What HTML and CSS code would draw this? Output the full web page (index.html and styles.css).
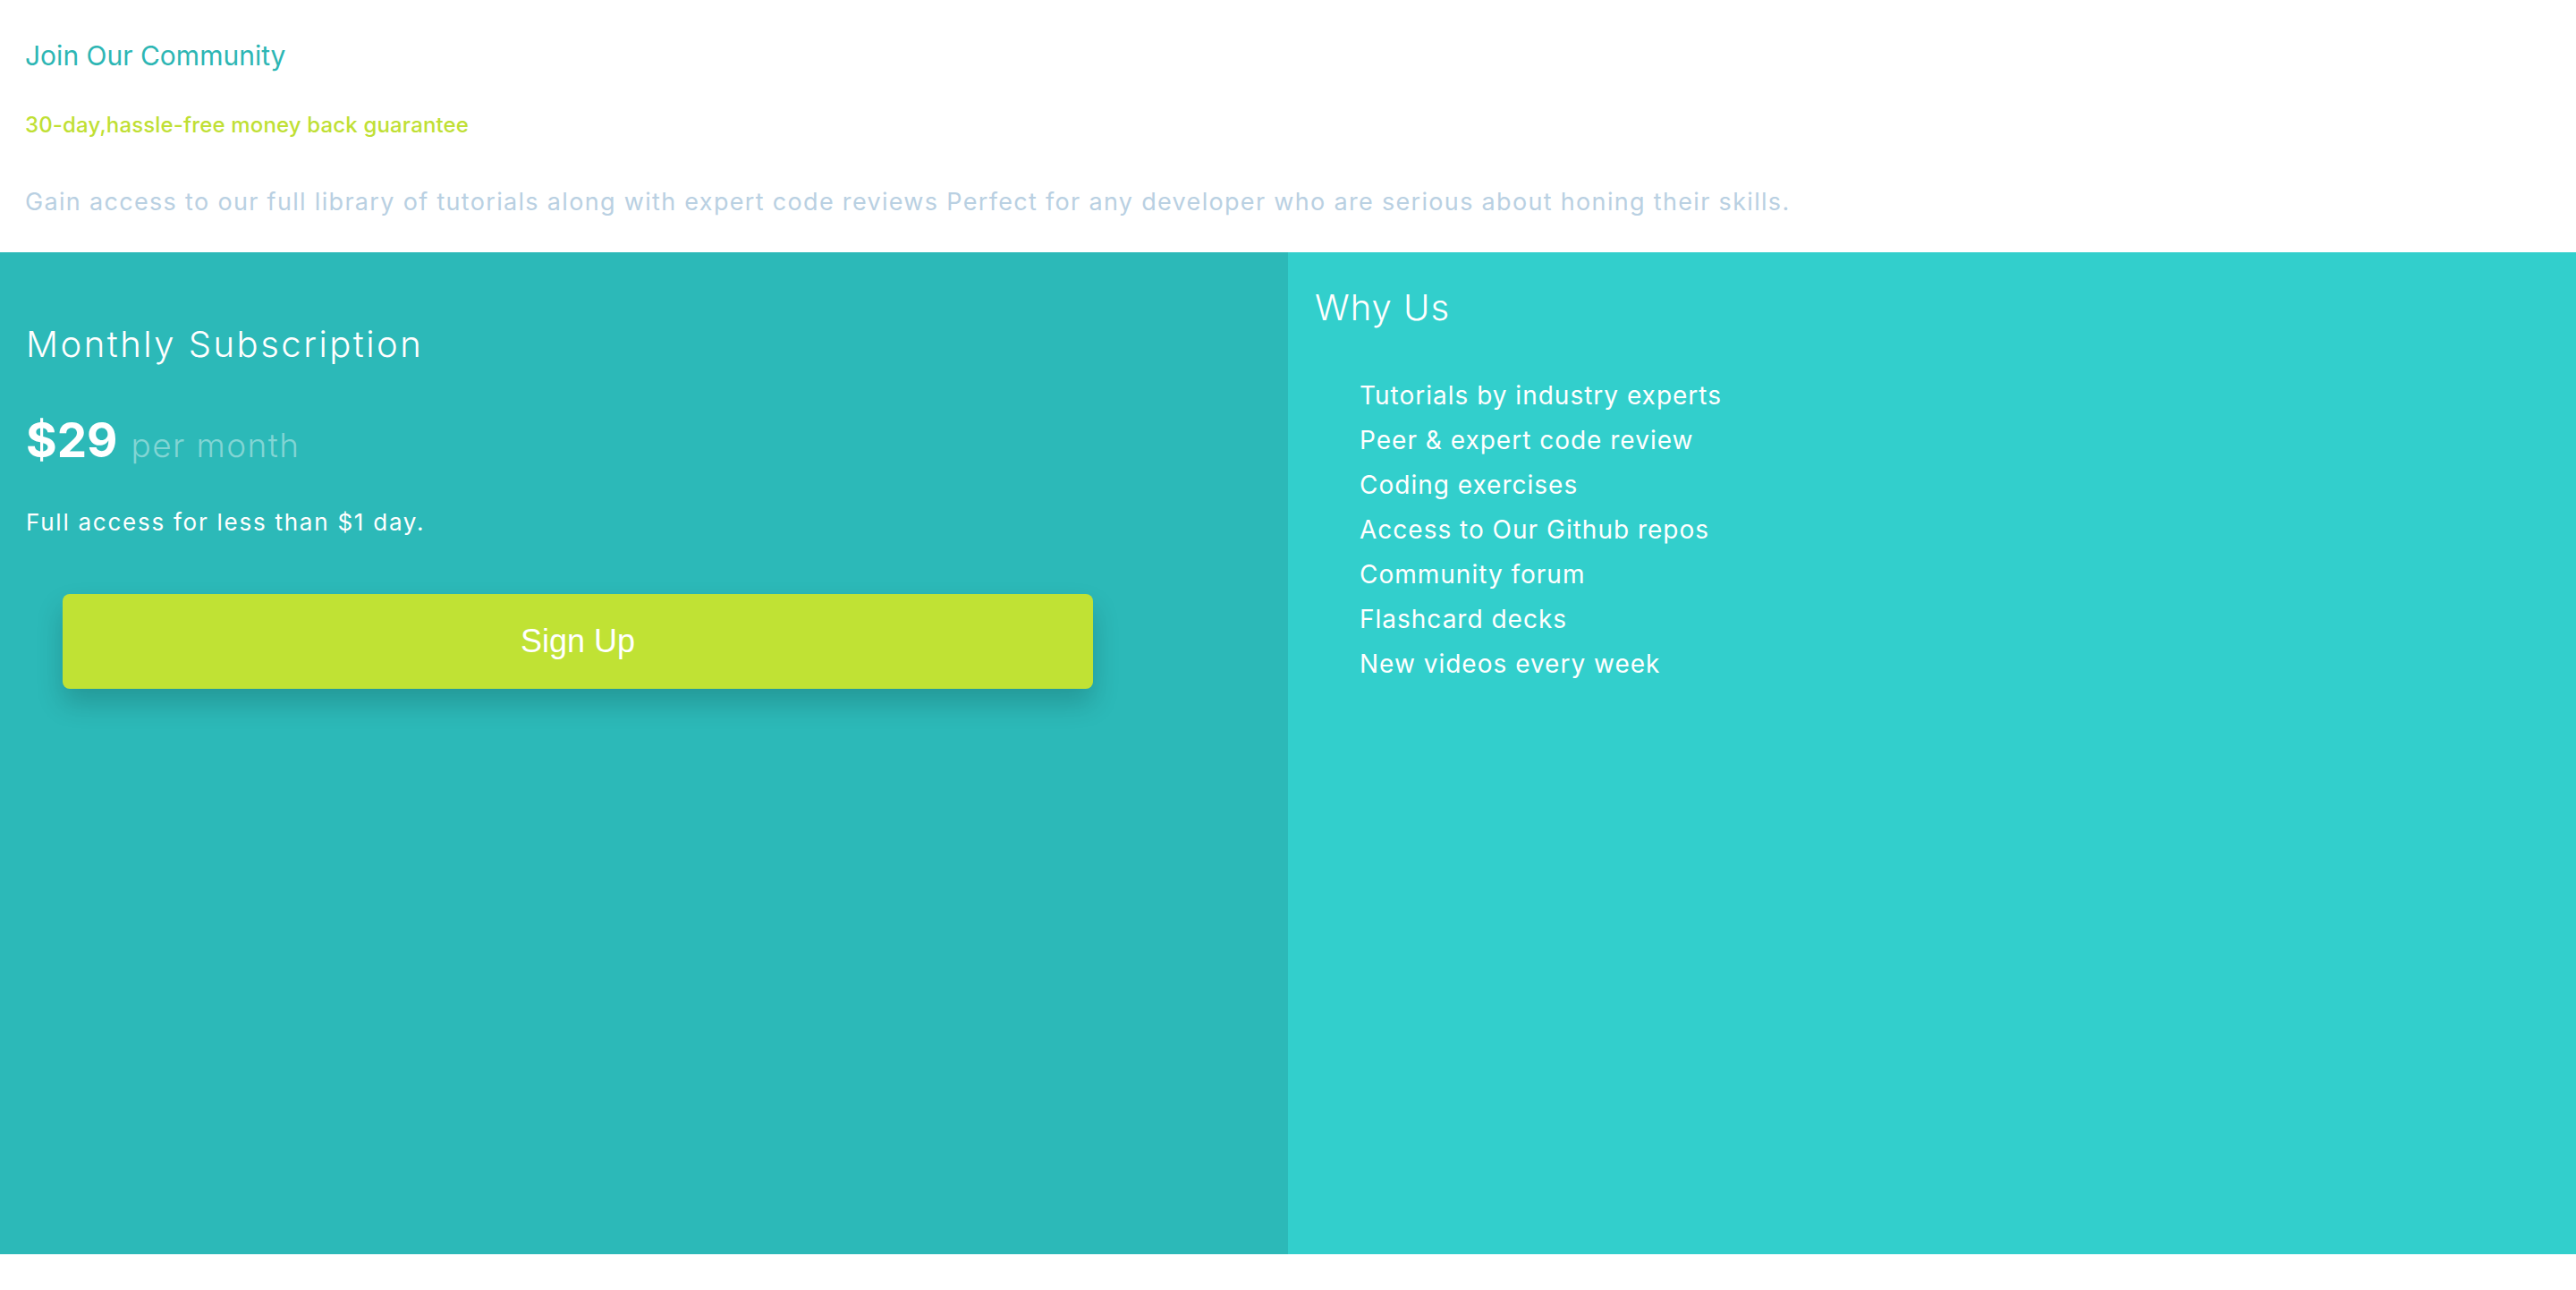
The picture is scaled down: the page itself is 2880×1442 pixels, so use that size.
FILE: index.html
```html
<!DOCTYPE html>
<html lang="en">
<head>
<meta charset="utf-8">
<title>Join Our Community</title>
<link rel="stylesheet" href="styles.css">
</head>
<body>
<header class="intro">
  <h1 class="intro-title">Join Our Community</h1>
  <p class="intro-guarantee">30-day,hassle-free money back guarantee</p>
  <p class="intro-desc">Gain access to our full library of tutorials along with expert code reviews Perfect for any developer who are serious about honing their skills.</p>
</header>
<main class="pricing">
  <section class="plan">
    <h2 class="plan-title">Monthly Subscription</h2>
    <p class="plan-price"><span class="plan-amount">$29</span><span class="plan-period">per month</span></p>
    <p class="plan-note">Full access for less than $1 day.</p>
    <button class="plan-button" type="button">Sign Up</button>
  </section>
  <section class="why">
    <h2 class="why-title">Why Us</h2>
    <ul class="why-list">
      <li>Tutorials by industry experts</li>
      <li>Peer &amp; expert code review</li>
      <li>Coding exercises</li>
      <li>Access to Our Github repos</li>
      <li>Community forum</li>
      <li>Flashcard decks</li>
      <li>New videos every week</li>
    </ul>
  </section>
</main>
</body>
</html>
```

FILE: styles.css
```css
* { box-sizing: border-box; }

html, body {
  margin: 0;
  padding: 0;
  background: #ffffff;
}

body {
  font-family: Inter, "Open Sans", "DejaVu Sans", sans-serif;
  font-weight: 400;
}

.intro {
  padding: 42px 28px 39px;
}

.intro-title {
  margin: 0 0 43px;
  font-size: 30px;
  line-height: 40px;
  font-weight: 400;
  color: #2db6b4;
}

.intro-guarantee {
  margin: 0 0 54px;
  font-size: 24px;
  line-height: 30px;
  font-weight: 500;
  letter-spacing: 0.15px;
  color: #c0df34;
}

.intro-desc {
  margin: 0;
  font-size: 27px;
  line-height: 34px;
  letter-spacing: 1.32px;
  color: #b9d0e2;
}

.pricing {
  display: grid;
  grid-template-columns: 1fr 1fr;
  height: 1120px;
  color: #ffffff;
}

.plan {
  background: #2cb9b8;
  padding: 79px 29px 0;
}

.plan-title {
  margin: 0 0 51px;
  font-size: 40px;
  line-height: 48px;
  font-weight: 300;
  letter-spacing: 2.5px;
}

.plan-price {
  margin: 0 0 44px;
  font-size: 53px;
  line-height: 64px;
  height: 64px;
}

.plan-amount {
  font-weight: 700;
}

.plan-period {
  margin-left: 15px;
  font-size: 37px;
  line-height: 40px;
  font-weight: 300;
  letter-spacing: 1.4px;
  color: #82d5d4;
}

.plan-note {
  margin: 0 0 64px;
  font-size: 26px;
  line-height: 32px;
  letter-spacing: 1.75px;
}

.plan-button {
  display: block;
  margin: 0 0 0 41px;
  width: 1152px;
  height: 106px;
  border: none;
  border-radius: 8px;
  background: #c0e234;
  color: #ffffff;
  font-family: "Liberation Sans", Arial, sans-serif;
  font-size: 36px;
  box-shadow: 0 16px 30px rgba(0, 0, 0, 0.18);
}

.why {
  background: #32cfcc;
  padding: 37px 30px 0;
}

.why-title {
  margin: 0 0 48px;
  font-size: 40px;
  line-height: 50px;
  font-weight: 300;
  letter-spacing: 1px;
}

.why-list {
  margin: 0;
  padding: 0 0 0 50px;
  list-style: none;
}

.why-list li {
  font-size: 28px;
  line-height: 50px;
  letter-spacing: 1px;
}
```
